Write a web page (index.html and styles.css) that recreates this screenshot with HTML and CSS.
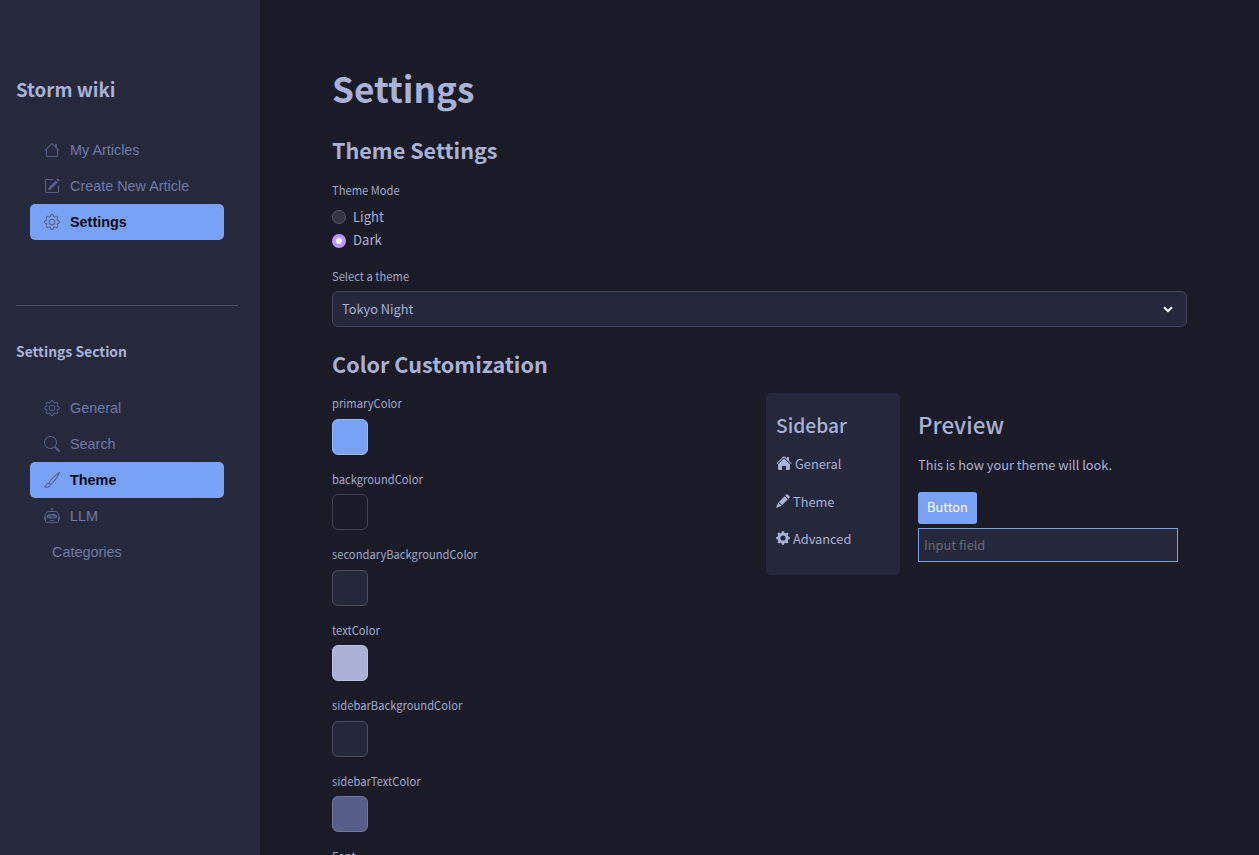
FILE: index.html
```html
<!DOCTYPE html>
<html lang="en">
<head>
    <meta charset="UTF-8">
    <meta name="viewport" content="width=device-width, initial-scale=1.0">
    <title>Settings</title>
    <link rel="stylesheet" href="styles.css">
</head>
<body>
    <div class="app">
        <aside class="sidebar">
            <h2 class="brand">Storm wiki</h2>
            <nav class="menu">
                <a class="menu-item">
                    <svg class="menu-icon" viewBox="0 0 16 16"><path d="M2 13.5V7h1v6.5a.5.5 0 0 0 .5.5h9a.5.5 0 0 0 .5-.5V7h1v6.5a1.5 1.5 0 0 1-1.5 1.5h-9A1.5 1.5 0 0 1 2 13.5zm11-11V6l-2-2V2.5a.5.5 0 0 1 .5-.5h1a.5.5 0 0 1 .5.5z"/><path d="M7.293 1.5a1 1 0 0 1 1.414 0l6.647 6.646a.5.5 0 0 1-.708.708L8 2.207 1.354 8.854a.5.5 0 1 1-.708-.708L7.293 1.5z"/></svg>
                    My Articles
                </a>
                <a class="menu-item">
                    <svg class="menu-icon" viewBox="0 0 16 16"><path d="M15.502 1.94a.5.5 0 0 1 0 .706L14.459 3.69l-2-2L13.502.646a.5.5 0 0 1 .707 0l1.293 1.293zm-1.75 2.456-2-2L4.939 9.21a.5.5 0 0 0-.121.196l-.805 2.414a.25.25 0 0 0 .316.316l2.414-.805a.5.5 0 0 0 .196-.12l6.813-6.814z"/><path d="M1 13.5A1.5 1.5 0 0 0 2.5 15h11a1.5 1.5 0 0 0 1.5-1.5v-6a.5.5 0 0 0-1 0v6a.5.5 0 0 1-.5.5h-11a.5.5 0 0 1-.5-.5v-11a.5.5 0 0 1 .5-.5H9a.5.5 0 0 0 0-1H2.5A1.5 1.5 0 0 0 1 2.5v11z"/></svg>
                    Create New Article
                </a>
                <a class="menu-item active">
                    <svg class="menu-icon" viewBox="0 0 16 16"><path d="M8 4.754a3.246 3.246 0 1 0 0 6.492 3.246 3.246 0 0 0 0-6.492zM5.754 8a2.246 2.246 0 1 1 4.492 0 2.246 2.246 0 0 1-4.492 0z"/><path d="M9.796 1.343c-.527-1.79-3.065-1.79-3.592 0l-.094.319a.873.873 0 0 1-1.255.52l-.292-.16c-1.64-.892-3.433.902-2.54 2.541l.159.292a.873.873 0 0 1-.52 1.255l-.319.094c-1.79.527-1.79 3.065 0 3.592l.319.094a.873.873 0 0 1 .52 1.255l-.16.292c-.892 1.64.901 3.434 2.541 2.54l.292-.159a.873.873 0 0 1 1.255.52l.094.319c.527 1.79 3.065 1.79 3.592 0l.094-.319a.873.873 0 0 1 1.255-.52l.292.16c1.64.893 3.434-.902 2.54-2.541l-.159-.292a.873.873 0 0 1 .52-1.255l.319-.094c1.79-.527 1.79-3.065 0-3.592l-.319-.094a.873.873 0 0 1-.52-1.255l.16-.292c.893-1.64-.902-3.433-2.541-2.54l-.292.159a.873.873 0 0 1-1.255-.52l-.094-.319zm-2.633.283c.246-.835 1.428-.835 1.674 0l.094.319a1.873 1.873 0 0 0 2.693 1.115l.291-.16c.764-.415 1.6.42 1.184 1.185l-.159.292a1.873 1.873 0 0 0 1.116 2.692l.318.094c.835.246.835 1.428 0 1.674l-.319.094a1.873 1.873 0 0 0-1.115 2.693l.16.291c.415.764-.42 1.6-1.185 1.184l-.291-.159a1.873 1.873 0 0 0-2.693 1.116l-.094.318c-.246.835-1.428.835-1.674 0l-.094-.319a1.873 1.873 0 0 0-2.692-1.115l-.292.16c-.764.415-1.6-.42-1.184-1.185l.159-.291A1.873 1.873 0 0 0 1.945 8.93l-.319-.094c-.835-.246-.835-1.428 0-1.674l.319-.094A1.873 1.873 0 0 0 3.06 4.377l-.16-.292c-.415-.764.42-1.6 1.185-1.184l.292.159a1.873 1.873 0 0 0 2.692-1.115l.094-.319z"/></svg>
                    Settings
                </a>
            </nav>
            <hr class="divider">
            <h3 class="section-title">Settings Section</h3>
            <nav class="menu">
                <a class="menu-item">
                    <svg class="menu-icon" viewBox="0 0 16 16"><path d="M8 4.754a3.246 3.246 0 1 0 0 6.492 3.246 3.246 0 0 0 0-6.492zM5.754 8a2.246 2.246 0 1 1 4.492 0 2.246 2.246 0 0 1-4.492 0z"/><path d="M9.796 1.343c-.527-1.79-3.065-1.79-3.592 0l-.094.319a.873.873 0 0 1-1.255.52l-.292-.16c-1.64-.892-3.433.902-2.54 2.541l.159.292a.873.873 0 0 1-.52 1.255l-.319.094c-1.79.527-1.79 3.065 0 3.592l.319.094a.873.873 0 0 1 .52 1.255l-.16.292c-.892 1.64.901 3.434 2.541 2.54l.292-.159a.873.873 0 0 1 1.255.52l.094.319c.527 1.79 3.065 1.79 3.592 0l.094-.319a.873.873 0 0 1 1.255-.52l.292.16c1.64.893 3.434-.902 2.54-2.541l-.159-.292a.873.873 0 0 1 .52-1.255l.319-.094c1.79-.527 1.79-3.065 0-3.592l-.319-.094a.873.873 0 0 1-.52-1.255l.16-.292c.893-1.64-.902-3.433-2.541-2.54l-.292.159a.873.873 0 0 1-1.255-.52l-.094-.319zm-2.633.283c.246-.835 1.428-.835 1.674 0l.094.319a1.873 1.873 0 0 0 2.693 1.115l.291-.16c.764-.415 1.6.42 1.184 1.185l-.159.292a1.873 1.873 0 0 0 1.116 2.692l.318.094c.835.246.835 1.428 0 1.674l-.319.094a1.873 1.873 0 0 0-1.115 2.693l.16.291c.415.764-.42 1.6-1.185 1.184l-.291-.159a1.873 1.873 0 0 0-2.693 1.116l-.094.318c-.246.835-1.428.835-1.674 0l-.094-.319a1.873 1.873 0 0 0-2.692-1.115l-.292.16c-.764.415-1.6-.42-1.184-1.185l.159-.291A1.873 1.873 0 0 0 1.945 8.93l-.319-.094c-.835-.246-.835-1.428 0-1.674l.319-.094A1.873 1.873 0 0 0 3.06 4.377l-.16-.292c-.415-.764.42-1.6 1.185-1.184l.292.159a1.873 1.873 0 0 0 2.692-1.115l.094-.319z"/></svg>
                    General
                </a>
                <a class="menu-item">
                    <svg class="menu-icon" viewBox="0 0 16 16"><path d="M11.742 10.344a6.5 6.5 0 1 0-1.397 1.398h-.001c.03.04.062.078.098.115l3.85 3.85a1 1 0 0 0 1.415-1.414l-3.85-3.85a1.007 1.007 0 0 0-.115-.1zM12 6.5a5.5 5.5 0 1 1-11 0 5.5 5.5 0 0 1 11 0z"/></svg>
                    Search
                </a>
                <a class="menu-item active">
                    <svg class="menu-icon" viewBox="0 0 16 16"><path d="M15.825.12a.5.5 0 0 1 .132.584c-1.53 3.43-4.743 8.17-7.095 10.64a6.067 6.067 0 0 1-2.373 1.534c-.018.227-.06.538-.16.868-.201.659-.667 1.479-1.708 1.74a8.118 8.118 0 0 1-3.078.132 3.659 3.659 0 0 1-.562-.135 1.382 1.382 0 0 1-.466-.247.714.714 0 0 1-.204-.288.622.622 0 0 1 .004-.443c.095-.245.316-.38.461-.452.394-.197.625-.453.867-.826.095-.144.184-.297.287-.472l.117-.198c.151-.255.326-.54.546-.848.528-.739 1.201-.925 1.746-.896.126.007.243.025.348.048.062-.172.142-.38.238-.608.261-.619.658-1.419 1.187-2.069 2.176-2.67 6.18-6.206 9.117-8.104a.5.5 0 0 1 .596.04zM4.705 11.912a1.23 1.23 0 0 0-.419-.1c-.246-.013-.573.05-.879.479-.197.275-.355.532-.5.777l-.105.177c-.106.181-.213.362-.32.528a3.39 3.39 0 0 1-.76.861c.69.112 1.736.111 2.657-.12.559-.139.843-.569.993-1.06a3.122 3.122 0 0 0 .126-.75l-.793-.792zm1.44.026c.12-.04.277-.1.458-.183a5.068 5.068 0 0 0 1.535-1.1c1.9-1.996 4.412-5.57 6.052-8.631-2.59 1.927-5.566 4.66-7.302 6.792-.442.543-.795 1.243-1.042 1.826-.121.288-.214.54-.275.72v.001l.575.575z"/></svg>
                    Theme
                </a>
                <a class="menu-item">
                    <svg class="menu-icon" viewBox="0 0 16 16"><path d="M6 12.5a.5.5 0 0 1 .5-.5h3a.5.5 0 0 1 0 1h-3a.5.5 0 0 1-.5-.5ZM3 8.062C3 6.76 4.235 5.765 5.53 5.886a26.58 26.58 0 0 0 4.94 0C11.765 5.765 13 6.76 13 8.062v1.157a.933.933 0 0 1-.765.935c-.845.147-2.34.346-4.235.346-1.895 0-3.39-.2-4.235-.346A.933.933 0 0 1 3 9.219V8.062Zm4.542-.827a.25.25 0 0 0-.217.068l-.92.9a24.767 24.767 0 0 1-1.871-.183.25.25 0 0 0-.068.495c.55.076 1.232.149 2.02.193a.25.25 0 0 0 .189-.071l.754-.736.847 1.71a.25.25 0 0 0 .404.062l.932-.97a25.286 25.286 0 0 0 1.922-.188.25.25 0 0 0-.068-.495c-.538.074-1.207.145-1.98.189a.25.25 0 0 0-.166.076l-.754.785-.842-1.7a.25.25 0 0 0-.182-.135Z"/><path d="M8.5 1.866a1 1 0 1 0-1 0V3h-2A4.5 4.5 0 0 0 1 7.5V8a1 1 0 0 0-1 1v2a1 1 0 0 0 1 1v1a2 2 0 0 0 2 2h10a2 2 0 0 0 2-2v-1a1 1 0 0 0 1-1V9a1 1 0 0 0-1-1v-.5A4.5 4.5 0 0 0 10.5 3h-2V1.866ZM14 7.5V13a1 1 0 0 1-1 1H3a1 1 0 0 1-1-1V7.5A3.5 3.5 0 0 1 5.5 4h5A3.5 3.5 0 0 1 14 7.5Z"/></svg>
                    LLM
                </a>
                <a class="menu-item no-icon">Categories</a>
            </nav>
        </aside>

        <main class="content">
            <h1>Settings</h1>
            <h2 class="theme-heading">Theme Settings</h2>

            <div class="field-label mode-label">Theme Mode</div>
            <div class="radio-group">
                <div class="radio"><span class="radio-dot"></span><span class="radio-text">Light</span></div>
                <div class="radio"><span class="radio-dot checked"></span><span class="radio-text">Dark</span></div>
            </div>

            <div class="field-label select-label">Select a theme</div>
            <div class="select">
                <span class="select-value">Tokyo Night</span>
                <svg class="chevron" viewBox="0 0 16 16"><path d="M4 6.2l4 4 4-4" fill="none" stroke="currentColor" stroke-width="2"/></svg>
            </div>

            <h2 class="color-heading">Color Customization</h2>

            <div class="columns">
                <div class="swatches">
                    <div class="color-field">
                        <div class="field-label">primaryColor</div>
                        <div class="swatch swatch-primary"></div>
                    </div>
                    <div class="color-field">
                        <div class="field-label">backgroundColor</div>
                        <div class="swatch swatch-bg"></div>
                    </div>
                    <div class="color-field">
                        <div class="field-label">secondaryBackgroundColor</div>
                        <div class="swatch swatch-secondary"></div>
                    </div>
                    <div class="color-field">
                        <div class="field-label">textColor</div>
                        <div class="swatch swatch-text"></div>
                    </div>
                    <div class="color-field">
                        <div class="field-label">sidebarBackgroundColor</div>
                        <div class="swatch swatch-secondary"></div>
                    </div>
                    <div class="color-field">
                        <div class="field-label">sidebarTextColor</div>
                        <div class="swatch swatch-sidebar-text"></div>
                    </div>
                    <div class="field-label">Font</div>
                </div>

                <div class="preview">
                    <div class="preview-sidebar">
                        <h3>Sidebar</h3>
                        <div class="preview-link">
                            <svg class="preview-icon" viewBox="0 0 16 16"><path d="M8.707 1.5a1 1 0 0 0-1.414 0L.646 8.146a.5.5 0 0 0 .708.708L8 2.207l6.646 6.647a.5.5 0 0 0 .708-.708L13 5.793V2.5a.5.5 0 0 0-.5-.5h-1a.5.5 0 0 0-.5.5v1.293L8.707 1.5Z"/><path d="m8 3.293 6 6V13.5a1.5 1.5 0 0 1-1.5 1.5H10v-4H6v4H3.5A1.5 1.5 0 0 1 2 13.5V9.293l6-6Z"/></svg>
                            General
                        </div>
                        <div class="preview-link">
                            <svg class="preview-icon narrow" viewBox="0 0 16 16"><path d="M12.854.146a.5.5 0 0 0-.707 0L10.5 1.793 14.207 5.5l1.647-1.646a.5.5 0 0 0 0-.708l-3-3zm.646 6.061L9.793 2.5 3.293 9 7 12.707l6.5-6.5zM6.3 13.4 2.6 9.7l-.3.45-2 5a.5.5 0 0 0 .65.65l5-2z"/></svg>
                            Theme
                        </div>
                        <div class="preview-link">
                            <svg class="preview-icon narrow" viewBox="0 0 16 16"><path d="M9.405 1.05c-.413-1.4-2.397-1.4-2.81 0l-.1.34a1.464 1.464 0 0 1-2.105.872l-.31-.17c-1.283-.698-2.686.705-1.987 1.987l.169.311c.446.82.023 1.841-.872 2.105l-.34.1c-1.4.413-1.4 2.397 0 2.81l.34.1a1.464 1.464 0 0 1 .872 2.105l-.17.31c-.698 1.283.705 2.686 1.987 1.987l.311-.169a1.464 1.464 0 0 1 2.105.872l.1.34c.413 1.4 2.397 1.4 2.81 0l.1-.34a1.464 1.464 0 0 1 2.105-.872l.31.17c1.283.698 2.686-.705 1.987-1.987l-.169-.311a1.464 1.464 0 0 1 .872-2.105l.34-.1c1.4-.413 1.4-2.397 0-2.81l-.34-.1a1.464 1.464 0 0 1-.872-2.105l.17-.31c.698-1.283-.705-2.686-1.987-1.987l-.311.169a1.464 1.464 0 0 1-2.105-.872l-.1-.34zM8 10.93a2.929 2.929 0 1 1 0-5.86 2.929 2.929 0 0 1 0 5.858z"/></svg>
                            Advanced
                        </div>
                    </div>
                    <div class="preview-main">
                        <h3>Preview</h3>
                        <p>This is how your theme will look.</p>
                        <button class="preview-button">Button</button>
                        <input class="preview-input" placeholder="Input field">
                    </div>
                </div>
            </div>
        </main>
    </div>
</body>
</html>
```

FILE: styles.css
```css
* {
    box-sizing: border-box;
}
html, body {
    height: 100%;
    margin: 0;
    overflow: hidden;
}
body {
    background-color: #1a1b26;
    color: #a9b1d6;
    font-family: "Noto Sans CJK SC", "Noto Sans", sans-serif;
}
h1, h2, h3, p {
    margin: 0;
}
.app {
    display: flex;
    height: 855px;
}

/* sidebar */
.sidebar {
    width: 260px;
    flex-shrink: 0;
    background-color: #26293c;
    padding: 73px 22px 0 16px;
}
.brand {
    font-size: 18.7px;
    line-height: 32px;
    font-weight: 600;
}
.menu {
    display: flex;
    flex-direction: column;
    margin: 27px 14px 0 14px;
}
.menu-item {
    display: flex;
    align-items: center;
    height: 36px;
    padding-left: 14px;
    border-radius: 5px;
    color: #6f79aa;
    font-family: "Liberation Sans", Arial, sans-serif;
    font-size: 14.4px;
}
.menu-item.active {
    background-color: #7aa2f4;
    color: #0b0c14;
    font-weight: 700;
}
.menu-item.no-icon {
    padding-left: 22px;
}
.menu-icon {
    width: 16px;
    height: 16px;
    margin-right: 10px;
    fill: #565f89;
}
.divider {
    height: 1px;
    margin: 65px 0 0 0;
    border: 0;
    background-color: #4a4d5e;
}
.section-title {
    margin-top: 34px;
    font-size: 13.9px;
    line-height: 22px;
    font-weight: 600;
}
.sidebar .section-title + .menu {
    margin-top: 28px;
}

/* main */
.content {
    flex: 1;
    padding: 64px 72px 0 72px;
}
h1 {
    font-size: 35.2px;
    line-height: 48px;
    font-weight: 700;
}
.theme-heading {
    margin-top: 22px;
    padding-bottom: 2px;
    font-size: 21.6px;
    line-height: 32px;
    font-weight: 600;
}
.color-heading {
    margin-top: 21px;
    padding-bottom: 2px;
    font-size: 21.6px;
    line-height: 32px;
    font-weight: 600;
}
.field-label {
    padding-bottom: 2px;
    color: #a0a8cc;
    font-size: 11.2px;
    line-height: 14px;
}
.mode-label {
    margin-top: 15px;
}
.radio-group {
    display: flex;
    flex-direction: column;
    gap: 2.5px;
    margin-top: 7.5px;
}
.radio {
    display: flex;
    align-items: center;
    gap: 7px;
    height: 21px;
    font-size: 13.1px;
}
.radio-text {
    padding-bottom: 2px;
}
.radio-dot {
    width: 14px;
    height: 14px;
    border-radius: 50%;
    border: 1px solid #565869;
    background-color: #33353f;
}
.radio-dot.checked {
    border: 4px solid #bb9af7;
    background-color: #eee;
}
.select-label {
    margin-top: 18px;
}
.select {
    display: flex;
    align-items: center;
    justify-content: space-between;
    height: 36px;
    margin-top: 6px;
    padding: 0 10px 0 9px;
    background-color: #25283b;
    border: 1px solid #414558;
    border-radius: 6px;
    font-size: 12.8px;
}
.select-value {
    padding-bottom: 2px;
}
.chevron {
    width: 16px;
    height: 16px;
    color: #fff;
}
.columns {
    display: flex;
    margin-top: 11px;
}
.swatches {
    width: 434px;
    flex-shrink: 0;
    padding-top: 3px;
}
.color-field {
    height: 75.5px;
}
.swatch {
    width: 36px;
    height: 36px;
    margin-top: 6.9px;
    border-radius: 6px;
    border: 1px solid #3f4254;
}
.swatch-primary {
    background-color: #7aa2f4;
    border-color: #97b7f9;
}
.swatch-bg {
    background-color: #1a1b26;
}
.swatch-secondary {
    background-color: #25283b;
    border-color: #4a4e61;
}
.swatch-text {
    background-color: #a9b1d6;
    border-color: #bcc3e0;
}
.swatch-sidebar-text {
    background-color: #565f89;
    border-color: #6d769c;
}

/* preview */
.preview {
    display: flex;
    align-items: flex-start;
    gap: 18px;
}
.preview-sidebar {
    width: 134px;
    height: 182px;
    padding: 19px 10px 0 10px;
    background-color: #25283b;
    border-radius: 5px;
}
.preview-sidebar h3 {
    font-size: 19.2px;
    line-height: 26px;
    font-weight: 500;
    margin-bottom: 14px;
}
.preview-link {
    display: flex;
    align-items: center;
    gap: 3px;
    height: 22px;
    margin-bottom: 16px;
    font-size: 12.8px;
}
.preview-link + .preview-link {
    margin-bottom: 15px;
}
.preview-icon {
    width: 16px;
    height: 16px;
    fill: #a9b1d6;
}
.preview-icon.narrow {
    width: 14px;
    height: 14px;
}
.preview-main {
    width: 260px;
    padding-top: 17px;
}
.preview-main h3 {
    font-size: 22.4px;
    line-height: 28px;
    font-weight: 500;
}
.preview-main p {
    margin-top: 17px;
    font-size: 12.8px;
    line-height: 20px;
}
.preview-button {
    display: block;
    height: 32px;
    margin-top: 17px;
    padding: 0 9px 3px 9px;
    border: 0;
    border-radius: 3px;
    background-color: #7aa2f4;
    color: #fff;
    font-family: inherit;
    font-size: 12.8px;
}
.preview-input {
    display: block;
    width: 260px;
    height: 34px;
    margin-top: 4px;
    padding: 0 5px 2px 5px;
    background-color: #25283b;
    border: 1px solid #7aa2f4;
    border-radius: 0;
    color: #a9b1d6;
    font-family: inherit;
    font-size: 12.8px;
}
.preview-input::placeholder {
    color: #6a6a70;
}
```
